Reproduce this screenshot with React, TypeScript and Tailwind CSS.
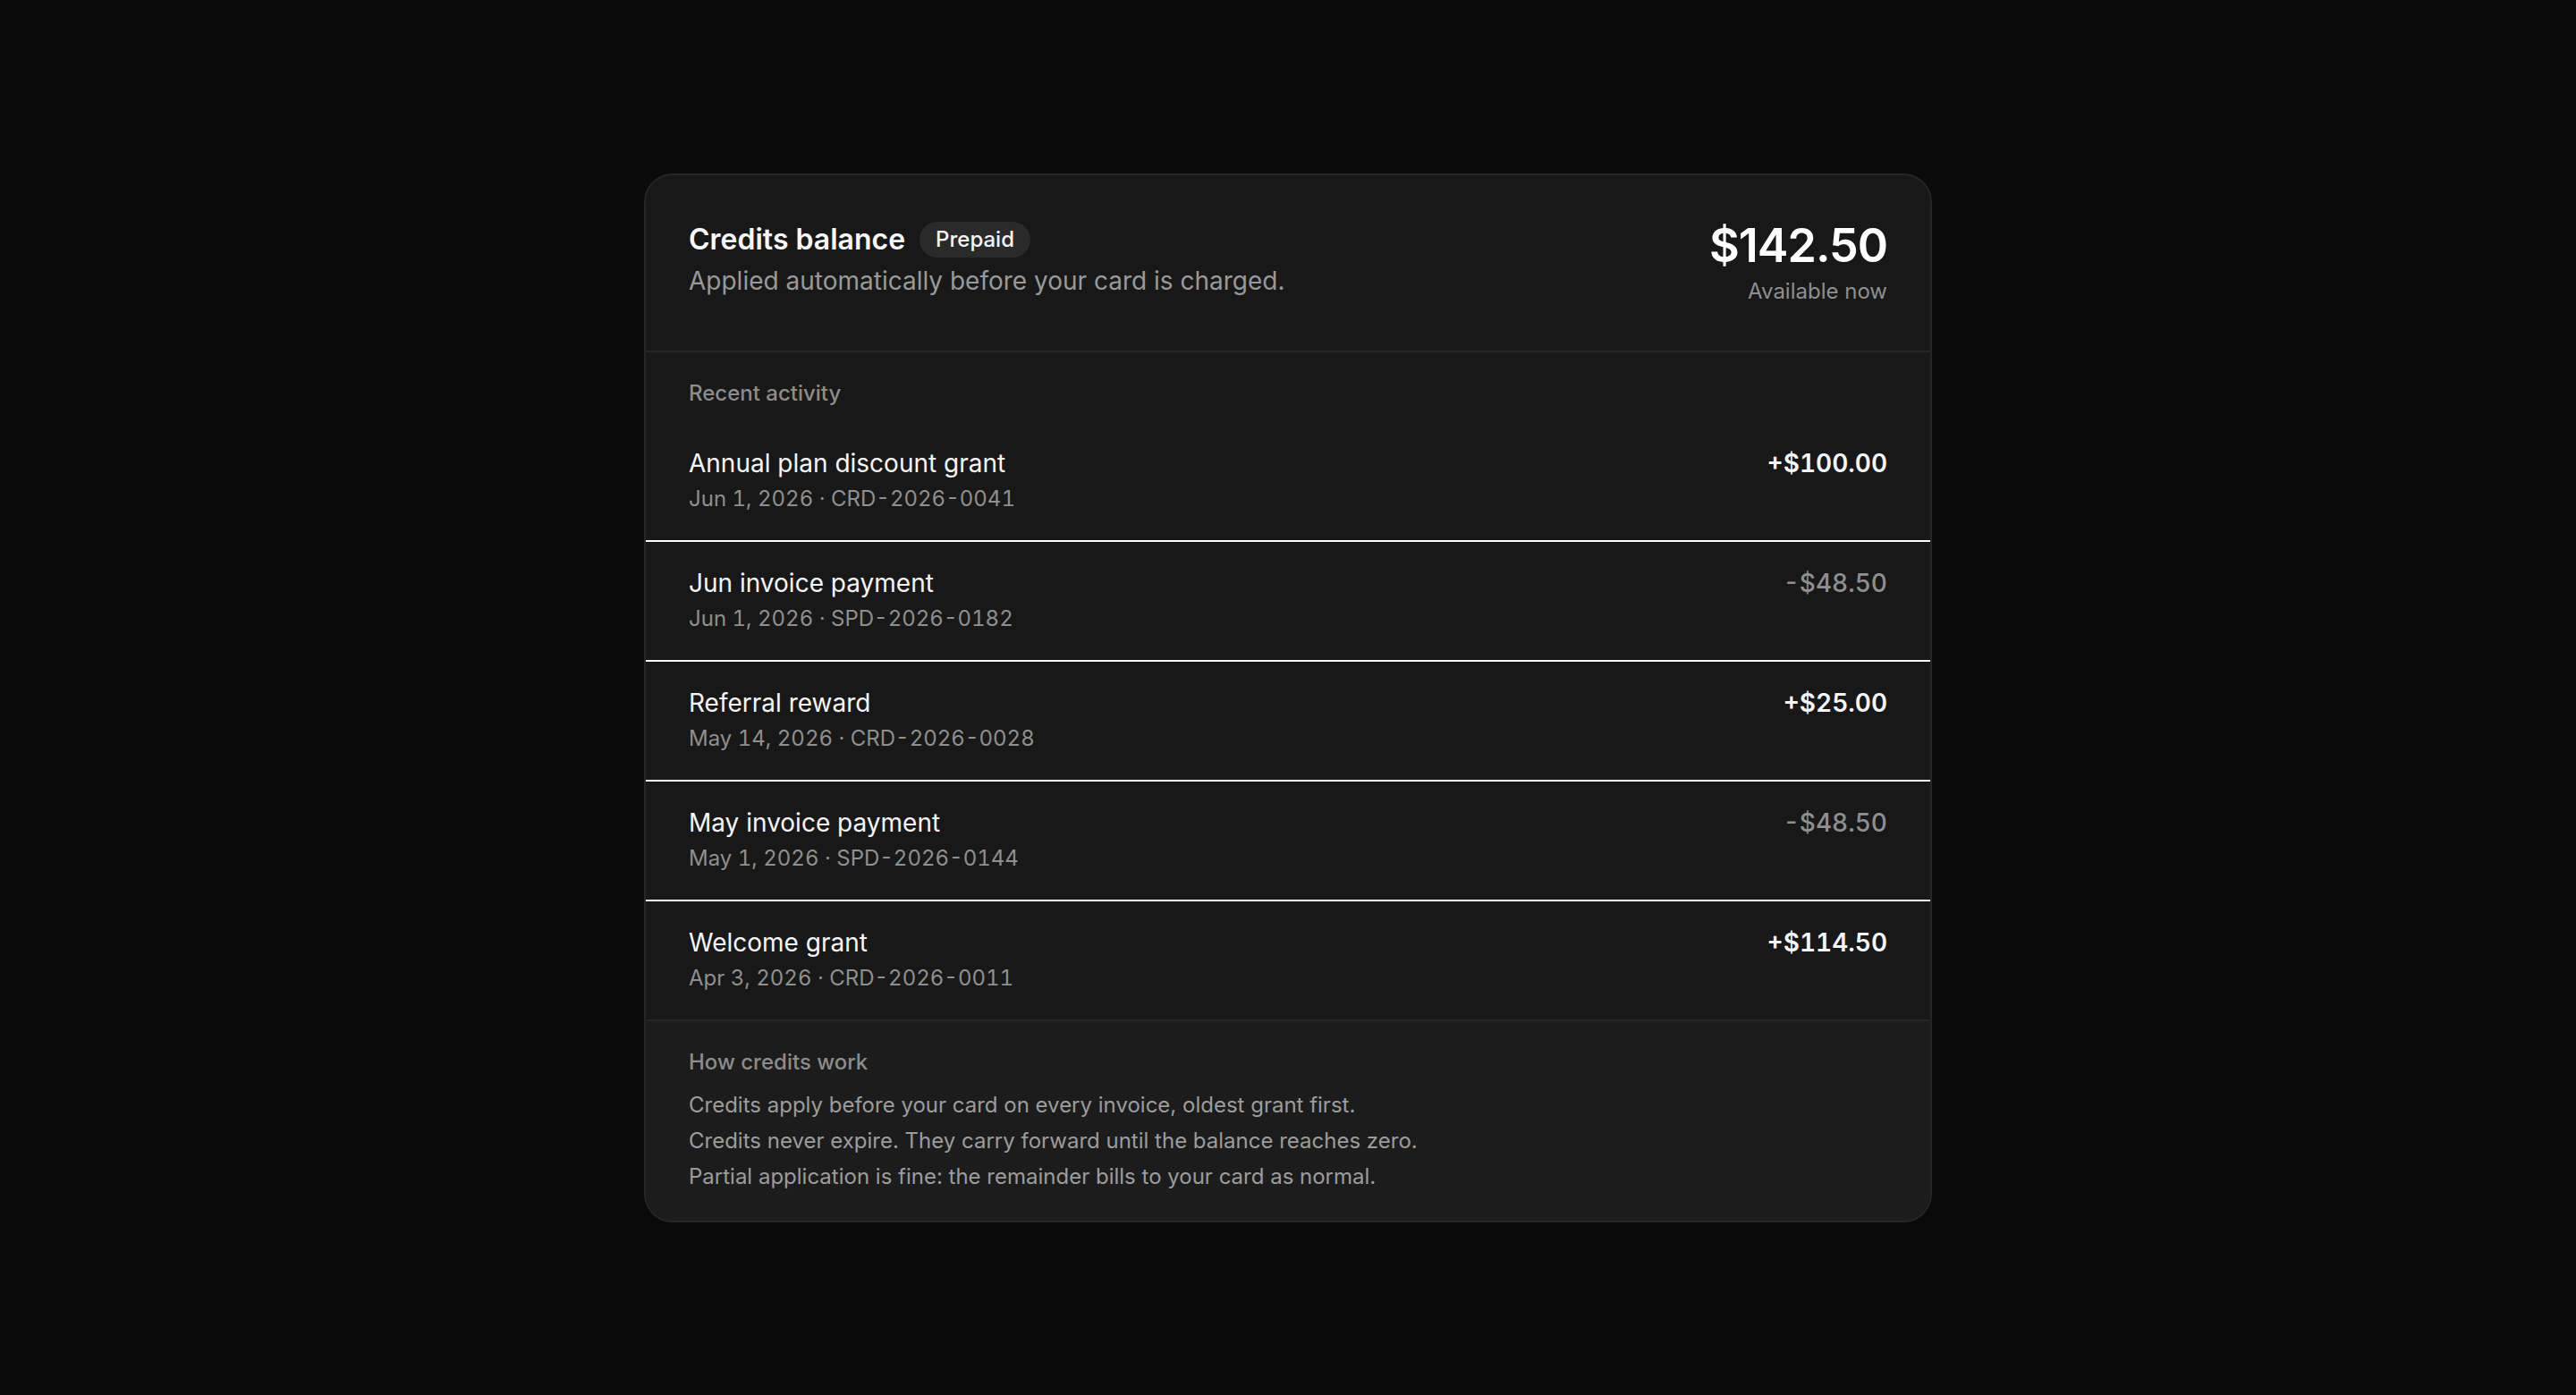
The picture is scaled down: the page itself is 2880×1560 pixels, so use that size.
const activity = [
  { title: 'Annual plan discount grant', meta: 'Jun 1, 2026 · CRD-2026-0041', amount: '+$100.00', credit: true },
  { title: 'Jun invoice payment', meta: 'Jun 1, 2026 · SPD-2026-0182', amount: '-$48.50', credit: false },
  { title: 'Referral reward', meta: 'May 14, 2026 · CRD-2026-0028', amount: '+$25.00', credit: true },
  { title: 'May invoice payment', meta: 'May 1, 2026 · SPD-2026-0144', amount: '-$48.50', credit: false },
  { title: 'Welcome grant', meta: 'Apr 3, 2026 · CRD-2026-0011', amount: '+$114.50', credit: true },
];

const notes = [
  'Credits apply before your card on every invoice, oldest grant first.',
  'Credits never expire. They carry forward until the balance reaches zero.',
  'Partial application is fine: the remainder bills to your card as normal.',
];

export default function App() {
  return (
    <div className="flex min-h-screen items-center justify-center bg-[#0a0a0a] font-['Inter','Noto_Sans',sans-serif] antialiased">
      <div className="w-[1440px] overflow-hidden rounded-[32px] border-2 border-[#262626] bg-[#181818]">
        {/* header */}
        <div className="flex items-start justify-between border-b-2 border-[#262626] p-12">
          <div className="pt-1">
            <div className="flex items-center gap-4">
              <h1 className="text-[32px] leading-[40px] font-semibold text-[#f7f7f7]">Credits balance</h1>
              <span className="rounded-full bg-[#2a2a2a] px-[18px] py-1 text-[24px] leading-[32px] font-medium text-[#f5f5f5]">
                Prepaid
              </span>
            </div>
            <p className="mt-[6px] text-[28px] leading-[40px] text-[#999999]">
              Applied automatically before your card is charged.
            </p>
          </div>
          <div className="text-right">
            <div className="text-[52px] leading-[62px] font-semibold tracking-[-1px] text-white">$142.50</div>
            <div className="mt-[2px] text-[24px] leading-[36px] text-[#8f8f8f]">Available now</div>
          </div>
        </div>

        {/* recent activity */}
        <div className="pt-[30px]">
          <div className="mb-4 px-12 text-[24px] leading-[32px] font-medium text-[#8c8c8c]">Recent activity</div>
          <ul>
            {activity.map((item, i) => (
              <li
                key={item.meta}
                className={
                  i < activity.length - 1
                    ? 'flex items-start justify-between border-b-2 border-white px-12 pt-7 pb-[30px]'
                    : 'flex items-start justify-between px-12 pt-7 pb-[30px]'
                }
              >
                <div>
                  <div className="text-[28px] leading-[36px] font-normal text-[#f5f5f5]">{item.title}</div>
                  <div className="mt-[6px] text-[24px] leading-[32px] text-[#8f8f8f] tabular-nums">{item.meta}</div>
                </div>
                <div
                  className={
                    item.credit
                      ? 'text-[28px] leading-[36px] font-semibold text-[#f5f5f5] tabular-nums'
                      : 'text-[28px] leading-[36px] font-medium text-[#8f8f8f] tabular-nums'
                  }
                >
                  {item.amount}
                </div>
              </li>
            ))}
          </ul>
        </div>

        {/* footer */}
        <div className="border-t-2 border-[#262626] bg-[#1c1c1c] px-12 pt-[30px] pb-[33px]">
          <div className="mb-4 text-[24px] leading-[32px] font-medium text-[#8c8c8c]">How credits work</div>
          <div className="flex flex-col gap-2">
            {notes.map((n) => (
              <p key={n} className="text-[24px] leading-[32px] text-[#9c9c9c]">
                {n}
              </p>
            ))}
          </div>
        </div>
      </div>
    </div>
  );
}
